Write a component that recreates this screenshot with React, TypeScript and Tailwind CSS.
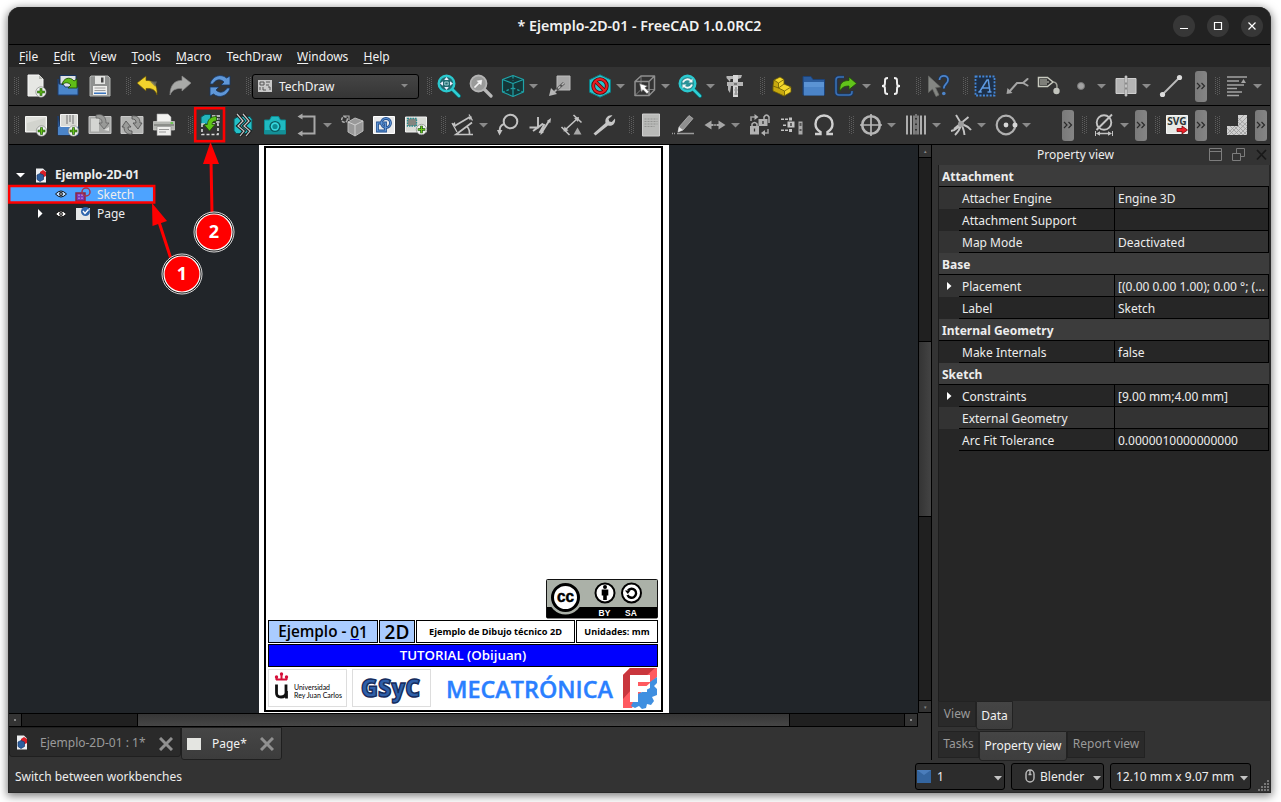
import React from "react";

const G = "#c3c3c3";
const D = "#8a8a8a";

type P = { children: React.ReactNode; className?: string };

function Svg({ children, className = "" }: P) {
  return (
    <svg width="24" height="24" viewBox="0 0 24 24" fill="none" className={"shrink-0 " + className}>
      {children}
    </svg>
  );
}

function PlusBadge({ cx = 17.5, cy = 18.5 }: { cx?: number; cy?: number }) {
  return (
    <g>
      <circle cx={cx} cy={cy} r="5.2" fill="#eef0ee" stroke="#777" strokeWidth=".6" />
      <path d={`M${cx - 3.8} ${cy}h7.6M${cx} ${cy - 3.8}v7.6`} stroke="#1d5a0a" strokeWidth="2.6" />
      <path d={`M${cx - 3.2} ${cy}h6.4M${cx} ${cy - 3.2}v6.4`} stroke="#6cc51c" strokeWidth="1.1" />
    </g>
  );
}

const icons: Record<string, React.ReactNode> = {
  fileNew: (
    <g>
      <path d="M4 1h11l4 4v17H4z" fill="#e6e7e4" stroke="#f8f8f8" />
      <path d="M15 1v4h4z" fill="#b5b7b2" />
      <PlusBadge cx={17} cy={18} />
    </g>
  ),
  open: (
    <g>
      <path d="M4 1.500h16v12H4z" fill="#dfe2e6" stroke="#16335f" />
      <path d="M2 5v16h20v-8H9L7 10H3z" fill="#4b86ca" stroke="#1c3f73" />
      <path d="M6 11c1-7 8-9 12-4l3-2v9h-9l3-3c-3-3-6-3-9 0z" fill="#5fbd17" stroke="#1f4f08" strokeWidth=".9" />
    </g>
  ),
  save: (
    <g>
      <path d="M3 2h17l2 2v18H2V3z" fill="#8f9190" stroke="#b4b6b4" />
      <path d="M7 2h10v8H7z" fill="#e3e4e2" />
      <path d="M13 3.500h2.500v5H13z" fill="#444" />
      <path d="M5 12h14v9H5z" fill="#efefed" />
      <path d="M6.500 14h11M6.500 16.500h11" stroke="#9c9c9c" />
      <path d="M6 18.500h12v1.500H6z" fill="#3b75bd" />
    </g>
  ),
  undo: (
    <g>
      <path d="M1 9l9-7v4.500c7-.5 12 4 11 14.500-1.500-5-5-7-11-6.500V17z" fill="#f1d22c" stroke="#665508" strokeWidth=".7" />
      <path d="M14 7.500h7l-2 5z" fill="#6d6d62" opacity=".8" />
    </g>
  ),
  redo: <path d="M23 9l-9-7v4.500C7 6 2 11 2 21c2-5 6-7 12-6.500V17z" fill="#a9aaa8" stroke="#868786" strokeWidth=".7" />,
  refresh: (
    <g fill="#5f97d8" stroke="#173764" strokeWidth=".8">
      <path d="M2 10C4 2 13-1 18.500 4L22 2v9h-9l3-3c-4-4-9-2-11 2z" />
      <path d="M22 14c-2 8-11 11-16.500 6L2 22v-9h9l-3 3c4 4 9 2 11-2z" />
    </g>
  ),
  zoomFit: (
    <g>
      <path d="M15 15l7 7" stroke="#0b5257" strokeWidth="4.400" strokeLinecap="round" />
      <path d="M15 15l7 7" stroke="#2ecfd4" strokeWidth="2.800" strokeLinecap="round" />
      <circle cx="9.500" cy="9.500" r="7.800" fill="#226a70" stroke="#2bc9cf" strokeWidth="2.400" />
      <path d="M9.500 3l2.300 3H7.200zM9.500 16l2.300-3H7.200zM3 9.500l3-2.300v4.600zM16 9.500l-3-2.300v4.600z" fill="#eef" />
      <path d="M7.800 8h3.400v3H7.800z" stroke="#b8e4e6" strokeWidth=".8" />
    </g>
  ),
  zoomSel: (
    <g>
      <path d="M15 15l7 7" stroke="#b9b9b9" strokeWidth="3.200" strokeLinecap="round" />
      <circle cx="9.500" cy="9.500" r="8" fill="#9a9b9a" stroke="#b4b4b4" strokeWidth="1.800" />
      <path d="M4.500 13l4.500-4.500-2-2 6.500-1-1 6.500-2-2L6 14.500z" fill="#f3f3f3" stroke="#777" strokeWidth=".4" />
    </g>
  ),
  cube: (
    <g stroke="#1fa3a8" strokeWidth="1.200" strokeLinejoin="round">
      <path d="M12 1.500l10.500 4v12.500L12 22.500 1.500 18V5.500z" fill="#143638" />
      <path d="M1.500 5.500l10.500 4 10.500-4M12 9.500v13" />
      <path d="M12 2v5M12 14l-10 4M12 14l10 4" strokeDasharray="2.500 2" />
    </g>
  ),
  link: (
    <g>
      <path d="M9 2h13v14H9z" fill="#a8a8a8" stroke="#bdbdbd" />
      <path d="M16 9L5 19" stroke="#555" strokeWidth="3" />
      <path d="M16 9L5 19" stroke="#b7b7b7" strokeWidth="1.500" strokeDasharray="3 2" />
      <path d="M1 22l2-8 6 6z" fill="#b7b7b7" />
    </g>
  ),
  drawStyle: (
    <g>
      <path d="M12 .8l10.500 5v12.400L12 23.200l-10.500-5V5.800z" fill="#27c3cb" stroke="#0c7f86" />
      <circle cx="12" cy="12" r="6.800" stroke="#53060a" strokeWidth="3.800" />
      <path d="M7.500 7.500l9 9" stroke="#53060a" strokeWidth="3.600" />
      <circle cx="12" cy="12" r="6.800" stroke="#e81d22" strokeWidth="2.200" />
      <path d="M7.200 7.200l9.600 9.600" stroke="#e81d22" strokeWidth="2.200" />
    </g>
  ),
  selBox: (
    <g stroke="#8f8f8f" strokeWidth="1.500" strokeLinejoin="round">
      <path d="M2 7.500L8 2h13.500v14L16 21.500H2zM2 7.500h14v14M16 7.500L21.500 2" />
      <path d="M8 2v13.500h13.500M8 15.500l-6 6" strokeWidth=".8" />
      <path d="M6.500 9.500l8 2.500-2.500 1.700 4 4-2 2-4-4-1.500 2.500z" fill="#fff" stroke="#555" strokeWidth=".6" />
    </g>
  ),
  zoomRefresh: (
    <g>
      <path d="M15 15l7 7" stroke="#0b5257" strokeWidth="4.400" strokeLinecap="round" />
      <path d="M15 15l7 7" stroke="#2ecfd4" strokeWidth="2.800" strokeLinecap="round" />
      <circle cx="9.500" cy="9.500" r="7.800" fill="#2a9298" stroke="#2bc9cf" strokeWidth="2.400" />
      <path d="M5 8.500c1.500-4 6-4 8-1.500M14 10.500c-1.500 4-6 4-8 1.500" stroke="#f3f6f6" strokeWidth="1.800" />
      <path d="M10.500 8.500h4v-4zM8.500 10.500H4.500v4z" fill="#f3f6f6" />
    </g>
  ),
  caliper: (
    <g fill="#b5b5b5">
      <path d="M10 1h5v22h-5z" fill="#d6d6d6" />
      <path d="M3.500 2H10v3H7.500L7 8 3.500 4zM15 1h4l-1 3-3 1z" />
      <path d="M4 8h16v4H8l-1 7-2-3V12H4z" />
      <path d="M11 9h3v2h-3z" fill="#777" />
      <path d="M12 14h2M11.500 16h3M12 18h2M11.500 20h3" stroke="#555" strokeWidth=".9" />
    </g>
  ),
  part: (
    <g stroke="#6b5c05" strokeWidth=".8" strokeLinejoin="round">
      <path d="M4 6l6-3 4 2.500V10l7 3v5l-7 4-11-6z" fill="#f3d72b" />
      <path d="M4 6l4.500 3v5l6 3v5L3 17v-5z" fill="#c7a90f" />
      <path d="M8.500 9L14 5.500M8.500 14l5.500-4M14.500 17l6.500-4M3 12l5.500 2" />
    </g>
  ),
  folder: (
    <g>
      <path d="M1 2.500h8l2 3h11.500V21H1z" fill="#2b5c9d" stroke="#1d4378" />
      <path d="M2 8h20v13.500H2z" fill="#4b84c8" />
      <path d="M2 8h20v5H2z" fill="#5b93d4" />
    </g>
  ),
  exportIcon: (
    <g>
      <path d="M10 3H5Q2 3 2 6v12q0 3 3 3h10q3 0 3-3v-1" stroke="#173866" strokeWidth="3.200" />
      <path d="M10 3H5Q2 3 2 6v12q0 3 3 3h10q3 0 3-3v-1" stroke="#3d72b5" strokeWidth="1.500" />
      <path d="M6 17C5 9 9 6.500 15 6.500V3l7.500 6.500-7.500 6V12c-4 0-7 1-9 5z" fill="#62c31b" stroke="#1f4f08" strokeWidth=".8" />
    </g>
  ),
  braces: (
    <path d="M9 4C6 4 6 5 6 8s0 4-3 4c3 0 3 1 3 4s0 4 3 4M15 4c3 0 3 1 3 4s0 4 3 4c-3 0-3 1-3 4s0 4-3 4" stroke="#efefef" strokeWidth="2" />
  ),
  whats: (
    <g>
      <path d="M2.500 2l12 11-5 .5L13 21l-3 1.500-3.500-7.500-4 3.500z" fill="#848682" stroke="#6a6b68" strokeWidth=".7" />
      <path d="M13.500 6c0-5.500 9-5.500 8.500 0 0 4-4.200 4-4.200 8.500" stroke="#173866" strokeWidth="3" />
      <path d="M13.500 6c0-5.500 9-5.500 8.500 0 0 4-4.200 4-4.200 8.500" stroke="#4d84c9" strokeWidth="1.700" />
      <circle cx="17.800" cy="19.500" r="1.800" fill="#4d84c9" />
    </g>
  ),
  annot: (
    <g>
      <rect x="2.500" y="2.500" width="19" height="19" fill="#1d2f47" stroke="#4487d8" strokeWidth="1.800" strokeDasharray="2 1.400" />
      <path d="M6.500 18L14 6h1.300L17 18M9.500 14h7M5.300 18h3.500M14.500 18h4" stroke="#5d9ae2" strokeWidth="1.500" />
    </g>
  ),
  leader: (
    <g>
      <path d="M4 18l8-9h6l4.500-4M18 9l4.500 2.500" stroke="#a5a5a5" strokeWidth="2" strokeLinecap="round" />
      <path d="M1.500 20l1-6 5 5z" fill="#a5a5a5" />
    </g>
  ),
  rich: (
    <g>
      <path d="M1.500 3.500h9l5.500 4.500-5.500 4.500h-9z" stroke="#c8cabf" strokeWidth="1.500" />
      <path d="M3 6h7M3 8h9M3 10h7" stroke="#c8cabf" strokeWidth="1" />
      <path d="M16 8q4.500 0 4 6" stroke="#9fa098" strokeWidth="1.500" />
      <circle cx="19.500" cy="17" r="3.200" fill="#c2c4bd" />
    </g>
  ),
  vertex: <circle cx="12" cy="12" r="3.500" fill="#a3a3a3" stroke="#777" />,
  centerLine: (
    <g>
      <path d="M2 4.500h20v15H2z" fill="#b4b4b4" stroke="#cfcfcf" />
      <path d="M12 2v20" stroke="#8a8a8a" strokeWidth="3" />
      <path d="M12 1.500v21" stroke="#e8e8e8" strokeWidth="1.200" strokeDasharray="7 2 3 2" />
    </g>
  ),
  line2: (
    <g>
      <path d="M3.500 20.500l17-17" stroke="#bdbdbd" strokeWidth="1.800" />
      <circle cx="3.500" cy="20.500" r="2.600" fill="#dcdcdc" />
      <circle cx="20.500" cy="3.500" r="2.600" fill="#dcdcdc" />
    </g>
  ),
  textLines: (
    <g>
      <path d="M2 3h20M2 7h12M2 11h17M2 14.500h10M2 18h15M2 21.500h12" stroke="#a4a4a4" strokeWidth="1.500" />
      <path d="M16 9l2.500-4L21 9z" fill="#a4a4a4" />
    </g>
  ),
  pageNew: (
    <g>
      <path d="M1.500 3.500h21v15.500h-21z" fill="#dfe0db" stroke="#f6f6f4" />
      <path d="M3 10l18-5v13H3z" fill="#c9cbc5" opacity=".6" />
      <PlusBadge cx={17.500} cy={18} />
    </g>
  ),
  template: (
    <g>
      <path d="M2 3v19h20v-9H4z" fill="#3f76b8" stroke="#1b3d70" />
      <path d="M4.500 1.500h17v12h-17z" fill="#d9dad6" stroke="#f3f3f3" />
      <path d="M11 2v9M14 2v7M17 2v9" stroke="#888" strokeWidth="1.300" />
      <path d="M2 14h20v8H2z" fill="#4b84c8" />
      <PlusBadge cx={17.500} cy={18} />
    </g>
  ),
  redraw: (
    <g>
      <path d="M1 3.500h22v17H1z" fill="#a8a9a7" stroke="#c4c4c4" />
      <path d="M3 5.500h8v13H3z" fill="#d4d5d2" />
      <path d="M8 2c7-2 10 2 10 8h3l-5 6-5-6h3c0-4-2-5-6-5z" fill="#989997" stroke="#5c5c5c" strokeWidth=".7" />
      <path d="M16 17l5-3v4z" fill="#dededc" />
    </g>
  ),
  redrawAll: (
    <g>
      <path d="M1 3.500h22v17H1z" fill="#b4b5b3" stroke="#c9c9c9" />
      <path d="M12 3c5-1 8 2 8 7h2l-4 6-5-6h3c0-3-1-4-4-4z" fill="#9a9b99" stroke="#4c4c4c" strokeWidth=".8" />
      <path d="M12 21c-5 1-8-2-8-7H2l4-6 5 6H8c0 3 1 4 4 4z" fill="#9a9b99" stroke="#4c4c4c" strokeWidth=".8" />
    </g>
  ),
  printer: (
    <g>
      <path d="M5 1h11l3 3v7H5z" fill="#f2f2f0" stroke="#aaa" strokeWidth=".6" />
      <path d="M1.500 8.500h21v8.500h-21z" fill="#b5b7b3" stroke="#d5d6d3" strokeWidth=".7" />
      <path d="M2 11h20v2H2z" fill="#8c8e8a" />
      <path d="M18.500 10h2.500" stroke="#5c3" strokeWidth="1.500" />
      <path d="M5 13.500h14v9H5z" fill="#eeeeec" stroke="#888" strokeWidth=".6" />
      <path d="M7 16.500h10M7 19h7" stroke="#999" />
    </g>
  ),
  view: (
    <g>
      <path d="M3 4l4-2.500h5.500v7L9 11H3z" fill="#23b5bd" stroke="#0a5358" />
      <path d="M14 3h8M17 6h5M18 9h4" stroke="#dfe3e3" strokeWidth="1.500" strokeDasharray="3.500 1" />
      <rect x="4" y="11" width="16" height="10.500" stroke="#dcdcdc" strokeWidth="1.600" strokeDasharray="3 2" />
      <path d="M18.500 3.500V8c-3 0-4.500 1-4.500 3.500h3L11.500 18 6 11.500h3.500c0-5 3-8 9-8z" fill="#5ec317" stroke="#1f5206" strokeWidth=".8" />
    </g>
  ),
  broken: (
    <g>
      <path d="M3 6l4-2.500h12l2 3v11l-4 3H5l-2-3z" fill="#23c0c8" stroke="#0a5358" />
      <path d="M6 1l6 7-5 5 6 5-4 5M12 1l6 7-5 5 6 5-4 5" stroke="#1d1d1d" strokeWidth="3.400" />
      <path d="M6 1l6 7-5 5 6 5-4 5M12 1l6 7-5 5 6 5-4 5" stroke="#c7c7c7" strokeWidth="1.200" />
    </g>
  ),
  camera: (
    <g>
      <path d="M1.500 7h5l2-3.500h7L17.500 7h5v14h-21z" fill="#1fb9c1" stroke="#0c8c93" />
      <path d="M2 17h20v4H2z" fill="#149098" />
      <circle cx="12" cy="13.500" r="5.600" fill="#0b5c62" />
      <circle cx="12" cy="13.500" r="4.200" fill="#37d7de" />
      <circle cx="12" cy="13.500" r="2.600" fill="#0d8990" />
    </g>
  ),
  section: (
    <g>
      <path d="M5 3.500h14.500v17H5" stroke="#a8a8a8" strokeWidth="2" />
      <path d="M2.500 3.500l5-3v6zM2.500 20.500l5-3v6z" fill="#a8a8a8" />
    </g>
  ),
  box3d: (
    <g>
      <path d="M8 9l7-4 8 3v10l-8 5-7-4z" fill="#999" stroke="#bbb" />
      <path d="M8 9l7 3 8-4M15 12v11" stroke="#cfcfcf" />
      <circle cx="4.500" cy="6.500" r="2.800" stroke="#ababab" strokeWidth="1.500" strokeDasharray="3 1" />
      <path d="M3 3h6v4" stroke="#ababab" strokeWidth="1.200" />
    </g>
  ),
  drawView: (
    <g>
      <path d="M1.500 3.500h21v17h-21z" fill="#e9eaeb" stroke="#fff" />
      <path d="M5.500 10h8v8h-8z" stroke="#1e4c8d" strokeWidth="2.800" />
      <circle cx="14" cy="10" r="4.500" stroke="#1e4c8d" strokeWidth="2.800" />
      <path d="M5.500 10h8v8h-8z" stroke="#5f94d4" strokeWidth="1.200" />
      <circle cx="14" cy="10" r="4.500" stroke="#5f94d4" strokeWidth="1.200" />
    </g>
  ),
  spread: (
    <g>
      <path d="M1.500 4h21v15h-21z" fill="#d9dbd6" stroke="#f2f2f2" />
      <rect x="3.500" y="5.500" width="9" height="7.500" fill="#85857f" stroke="#268c90" strokeWidth="1.300" strokeDasharray="1.500 1" />
      <PlusBadge cx={17.500} cy={16.500} />
    </g>
  ),
  lenDim: (
    <g stroke={G} strokeWidth="1.700">
      <path d="M3.500 13L18 4.500" />
      <path d="M1 11.500l3-2.500.7 4.700zM21 3.500l-4 .2 2 3.800z" fill={G} stroke="none" />
      <path d="M22 21.500H5L21 9.500M16 13.500c2 2 2.700 5 2.500 8" />
      <path d="M1 10l5 9M18 1.500l3.500 6" strokeWidth="1.300" />
    </g>
  ),
  balloon: (
    <g stroke={G} strokeWidth="2">
      <circle cx="14.500" cy="8.500" r="6.800" />
      <path d="M8 11c-5 2-4 5-4.500 9" />
      <path d="M1 17h5.500l-3 5.500z" fill={G} stroke="none" />
    </g>
  ),
  axo: (
    <g stroke={G} strokeWidth="1.900">
      <path d="M1.500 14.500H10V4M10 14.500l-5 3.500M10 14.500l5-4M14 19L21 8M11.500 20l5-9" />
      <path d="M12.500 22l.5-5 3 2zM23 5l-.7 5-3.500-2z" fill={G} stroke="none" />
    </g>
  ),
  landmark: (
    <g stroke={G} strokeWidth="1.600">
      <path d="M5 17L18 5M13.500 2l8 7.500M1.500 14l8 8" />
      <path d="M3.500 18.500l1-5 4 4zM19 4l-1 5-4-4z" fill={G} stroke="none" />
      <path d="M13.500 21.500l4-7 4 7z" fill="#a8a8a8" stroke="none" />
    </g>
  ),
  wrench: <path d="M3.500 22.500l-2-2L13.500 10c-1-5 3-8.500 7-7.500L16.500 6l.8 2.500 2.500.5L23 5.500c1 5-3 8.500-7 7z" fill="#c6c6c6" />,
  sheet: (
    <g>
      <path d="M3.500 1h17v22h-17z" fill="#b9bab8" stroke="#cfcfcf" />
      <path d="M5.500 6h13M5.500 8.500h13M5.500 11h13M5.500 13.500h10" stroke="#939492" strokeDasharray="2 1" />
    </g>
  ),
  pencil: (
    <g>
      <path d="M7 19l1-5L18 2.500l4 3L12 17z" fill="#8f8f8f" stroke="#b5b5b5" strokeWidth=".8" />
      <path d="M7 19l1-5 4 3z" fill="#e8e8e8" />
      <path d="M1 20.500h4" stroke="#9b9b9b" strokeWidth="1.300" strokeDasharray="1 1" />
      <path d="M6 20.500h17" stroke="#9b9b9b" strokeWidth="1.600" />
    </g>
  ),
  hArrows: (
    <g fill="#a6a6a6">
      <path d="M1.500 12l7-4.500v9zM22.500 12l-7-4.500v9z" />
      <path d="M8 11h2.500v2H8zM13.500 11H16v2h-2.500zM11 11.300h2v1.400h-2z" />
    </g>
  ),
  locks: (
    <g>
      <rect x="2" y="13" width="9" height="8.500" fill="#b2b2b2" />
      <path d="M4 13v-2q2.500-3 5 0v2" stroke="#b2b2b2" strokeWidth="1.500" />
      <rect x="10.500" y="6" width="9" height="7" fill="#b2b2b2" />
      <path d="M16 6V4q2.500-4 5 0v6" stroke="#b2b2b2" strokeWidth="1.500" />
      <path d="M3 8V4h4M20 16v4h-4" stroke="#9d9d9d" strokeWidth="1.600" />
      <path d="M6.500 1l4 3-4 3zM17 17l-4 3 4 3z" fill="#b2b2b2" />
      <path d="M6.500 15.500v3M15 8v3" stroke="#333" strokeWidth="1.300" />
    </g>
  ),
  stack: (
    <g fill={G}>
      <path d="M1 5.500h3v1.500H1zM5 5.500h3v1.500H5zM1 16.500h3V18H1zM5 16.500h3V18H5zM3 11.500h3V13H3zM9 4.500v3h3v-3zM9 16v3h3v-3z" />
      <path d="M7.500 8.500h7v6h-7z" />
      <path d="M10.200 10v3h1.600v-3z" fill="#444" />
      <path d="M18.500 8.500h4v13h-4z" fill="#aaa" />
      <path d="M19.500 10h2v3h-2zM19.500 16h2v2h-2z" fill="#555" />
    </g>
  ),
  omega: <path d="M3 21h5.500v-2C5 17 3.500 14 3.500 11c0-5 3.500-8.500 8.500-8.500s8.500 3.500 8.500 8.500c0 3-1.500 6-5 8v2H21" stroke="#cfcfcf" strokeWidth="2.400" />,
  centerMark: (
    <g stroke="#b5b5b5">
      <circle cx="12" cy="12" r="8.800" strokeWidth="2.600" />
      <path d="M12 1v22M1 12h22" strokeWidth="1.700" />
    </g>
  ),
  threads: (
    <g stroke="#b5b5b5">
      <path d="M3 2.500v19M7 2.500v19M17 2.500v19M21 2.500v19" strokeWidth="1.900" />
      <path d="M10 2.500v19M14 2.500v19" strokeWidth="1.200" />
      <path d="M12 1v22" strokeWidth="1" strokeDasharray="4 1.500" />
    </g>
  ),
  intersect: (
    <g stroke={G} strokeWidth="1.900">
      <path d="M7 2c3 5 8 11 8.500 20M19.500 4L5 16M2 18c7-1 9-8 13-6 3 1 5 2 7 5M12 12c-1 4-3 7-6 10" />
      <circle cx="12" cy="11" r="3" fill="#9d9d9d" stroke="none" />
    </g>
  ),
  circ: (
    <g>
      <circle cx="12" cy="12" r="9.300" stroke="#b0b0b0" strokeWidth="2.200" />
      <circle cx="12" cy="12" r="2.400" fill="#d6d6d6" />
      <circle cx="21" cy="12" r="2.500" fill="#d6d6d6" />
    </g>
  ),
  diameter: (
    <g stroke={G} strokeWidth="1.900">
      <circle cx="12" cy="9.500" r="7.300" />
      <path d="M4.500 17L20 1.500" />
      <path d="M6 20.500h12" strokeWidth="1.300" />
      <path d="M4 20.500l4-2.300v4.600zM20 20.500l-4-2.300v4.600z" fill={G} stroke="none" />
      <path d="M3.500 18v5M20.500 18v5" strokeWidth="1" />
    </g>
  ),
  svgExport: (
    <g>
      <path d="M1.500 2.500h21v18h-21z" fill="#e6e8e4" stroke="#f5f5f5" />
      <text x="2.200" y="11.500" fontSize="10" fontWeight="700" fontFamily="Noto Sans, sans-serif" fill="#2b3436" textLength="19.500" lengthAdjust="spacingAndGlyphs">SVG</text>
      <path d="M12 15.500h5V13l5.500 4-5.500 4v-2.500h-5z" fill="#ef2029" stroke="#7a0a0c" strokeWidth=".8" />
    </g>
  ),
  hatch: (
    <g>
      <path d="M13 2h9v20H2v-9h11z" fill="#d0d0d0" />
      <path d="M13 5l9 8M13 9l9 8M13 13l9 9M9 13l9 9M5 13l9 9M2 15l7 7M22 4l-18 18M22 9L9 22M22 14l-8 8M22 18l-4 4M13 8l6-6M10 13l-8 8" stroke="#9a9a9a" strokeWidth=".8" />
    </g>
  ),
};

function Tool({ name, drop = false, gap = "" }: { name: string; drop?: boolean; gap?: string }) {
  return (
    <div className={"flex shrink-0 items-center " + gap + (drop ? " w-[45px]" : " w-8")}>
      <div className="flex w-8 shrink-0 justify-center">
        <Svg>{icons[name]}</Svg>
      </div>
      {drop && (
        <svg width="9" height="5" className="shrink-0">
          <path d="M0 0h9L4.500 4.500z" fill={D} />
        </svg>
      )}
    </div>
  );
}

function Handle({ w = "w-[15px]" }: { w?: string }) {
  return (
    <div className={"flex shrink-0 justify-end " + w}>
      <svg width="6" height="18">
        {[0, 2, 4].map((x) => (
          <path key={x} d={`M${x + 0.5} ${x === 2 ? 1 : 0}v17`} stroke="#5d5d5d" strokeDasharray="1 1" />
        ))}
      </svg>
    </div>
  );
}

function More({ gap = "" }: { gap?: string }) {
  return (
    <div className={"flex h-[31px] w-3 shrink-0 items-center justify-center rounded-[3px] bg-gradient-to-r from-[#7a7a7a] to-[#858585] " + gap}>
      <svg width="10" height="8" fill="none" stroke="#2a2a2a" strokeWidth="1.200">
        <path d="M1 1l3 3-3 3M5.500 1l3 3-3 3" />
      </svg>
    </div>
  );
}

function DocIcon() {
  return (
    <svg width="12" height="15" viewBox="0 0 12 15">
      <path d="M1 .5h7l3 3v11H1z" fill="#eef0f2" />
      <path d="M5 4l3-2 3 2v4l-3 1.500L5 8z" fill="#d81e26" />
      <path d="M2 7l3-1.500L8.500 7v4.500L5 13.500l-3-2z" fill="#2d5f9f" stroke="#173a6b" strokeWidth=".7" />
    </svg>
  );
}

function Eye({ c }: { c: string }) {
  return (
    <svg width="12" height="8" viewBox="0 0 12 8">
      <path d="M.5 4Q6-2 11.500 4 6 10 .5 4z" fill={c} stroke="#111" strokeWidth="1" />
      <circle cx="6" cy="4" r="1.900" fill="#111" />
      <circle cx="6" cy="4" r=".8" fill="#fff" />
    </svg>
  );
}

const props: { k: string; v?: string; head?: boolean; light?: boolean; exp?: boolean }[] = [
  { k: "Attachment", head: true },
  { k: "Attacher Engine", v: "Engine 3D", light: true },
  { k: "Attachment Support", v: "" },
  { k: "Map Mode", v: "Deactivated", light: true },
  { k: "Base", head: true },
  { k: "Placement", v: "[(0.00 0.00 1.00); 0.00 °; (…", light: true, exp: true },
  { k: "Label", v: "Sketch" },
  { k: "Internal Geometry", head: true },
  { k: "Make Internals", v: "false" },
  { k: "Sketch", head: true },
  { k: "Constraints", v: "[9.00 mm;4.00 mm]", exp: true },
  { k: "External Geometry", v: "", light: true },
  { k: "Arc Fit Tolerance", v: "0.0000010000000000" },
];

function TitleBar() {
  return (
    <div className="flex h-[38px] shrink-0 items-center border-b border-black bg-[#222222]">
      <div className="w-[97px]" />
      <div className="flex-1 text-center text-[14.2px] font-semibold text-[#f2f2f2]">* Ejemplo-2D-01 - FreeCAD 1.0.0RC2</div>
      <div className="mr-[7px] flex gap-3">
        {["M7 13.500h8", "M7.500 7.500h7v7h-7z", "M7.500 7.500l7 7M14.500 7.500l-7 7"].map((d) => (
          <svg key={d} width="22" height="22" fill="none">
            <circle cx="11" cy="11" r="11" fill="#373737" />
            <path d={d} stroke="#fff" strokeWidth="1.200" />
          </svg>
        ))}
      </div>
    </div>
  );
}

function MenuBar() {
  return (
    <div className="flex h-[22px] shrink-0 items-center gap-[15.2px] bg-[#262626] pt-[2px] pl-[10px] text-[#f2f2f2]">
      {["File", "Edit", "View", "Tools", "Macro"].map((m) => (
        <span key={m}>
          <u className="underline-offset-2">{m[0]}</u>
          {m.slice(1)}
        </span>
      ))}
      <span>TechDraw</span>
      {["Windows", "Help"].map((m) => (
        <span key={m}>
          <u className="underline-offset-2">{m[0]}</u>
          {m.slice(1)}
        </span>
      ))}
    </div>
  );
}

function Toolbars() {
  return (
    <>
      <div className="flex h-[39px] shrink-0 items-center border-b border-black bg-[#333333]">
        <Handle w="w-[11px]" />
        <Tool name="fileNew" />
        <Tool name="open" />
        <Tool name="save" />
        <Handle w="w-4" />
        <Tool name="undo" />
        <Tool name="redo" />
        <Tool name="refresh" gap="ml-2" />
        <Handle w="w-4" />
        <div className="flex h-[25px] w-[167px] shrink-0 items-center rounded-[3px] border border-black bg-gradient-to-b from-[#454545] to-[#353535] pl-[5px] text-[#f2f2f2]">
          <svg width="14" height="12">
            <path d="M0 0h14v12H0z" fill="#c9c9c9" />
            <path d="M2 2h4v3H2zM8 2h4M8 5h3M2 7v3M5 7v3h3M10 7h2v3" fill="none" stroke="#555" />
          </svg>
          <span className="ml-[7px] flex-1 pt-[2px]">TechDraw</span>
          <svg width="7" height="4" className="mr-[10px]">
            <path d="M0 0h7L3.500 3.500z" fill={D} />
          </svg>
        </div>
        <Handle w="w-[14px]" />
        <Tool name="zoomFit" />
        <Tool name="zoomSel" />
        <Tool name="cube" drop />
        <Tool name="link" gap="ml-[2px]" />
        <Tool name="drawStyle" drop gap="ml-2" />
        <Tool name="selBox" drop />
        <Tool name="zoomRefresh" drop />
        <Tool name="caliper" />
        <Handle />
        <Tool name="part" />
        <Tool name="folder" />
        <Tool name="exportIcon" drop />
        <Tool name="braces" />
        <Handle />
        <Tool name="whats" />
        <Handle />
        <Tool name="annot" />
        <Tool name="leader" />
        <Tool name="rich" />
        <Tool name="vertex" drop />
        <Tool name="centerLine" drop />
        <Tool name="line2" />
        <More gap="ml-2" />
        <Handle w="w-[14px]" />
        <Tool name="textLines" drop />
      </div>
      <div className="flex h-[39px] shrink-0 items-center border-b border-black bg-[#333333]">
        <Handle w="w-[11px]" />
        <Tool name="pageNew" />
        <Tool name="template" />
        <Tool name="redraw" />
        <Tool name="redrawAll" />
        <Tool name="printer" />
        <Handle w="w-[14px]" />
        <Tool name="view" />
        <Tool name="broken" gap="ml-px" />
        <Tool name="camera" />
        <Tool name="section" drop />
        <Tool name="box3d" />
        <Tool name="drawView" />
        <Tool name="spread" />
        <Handle />
        <Tool name="lenDim" drop />
        <Tool name="balloon" />
        <Tool name="axo" />
        <Tool name="landmark" />
        <Tool name="wrench" />
        <Handle />
        <Tool name="sheet" />
        <Tool name="pencil" />
        <Tool name="hArrows" drop />
        <Tool name="locks" />
        <Tool name="stack" />
        <Tool name="omega" />
        <Handle />
        <Tool name="centerMark" drop />
        <Tool name="threads" drop />
        <Tool name="intersect" drop />
        <Tool name="circ" drop />
        <More gap="ml-[27px]" />
        <Handle w="w-[14px]" />
        <Tool name="diameter" drop />
        <More gap="ml-[2px]" />
        <Handle w="w-[14px]" />
        <Tool name="svgExport" />
        <More gap="ml-[2px]" />
        <Handle w="w-[14px]" />
        <Tool name="hatch" />
        <More gap="ml-[2px]" />
      </div>
    </>
  );
}

function Tree() {
  return (
    <div className="w-[250px] shrink-0 pt-[21px] text-[#ededed]">
      <div className="flex h-[19px] items-center">
        <svg width="9" height="5" className="ml-[7px]">
          <path d="M0 0h9L4.500 4.500z" fill="#fff" />
        </svg>
        <div className="ml-[10px]">
          <DocIcon />
        </div>
        <b className="ml-[8px] pb-[2px] text-[11.950px]">Ejemplo-2D-01</b>
      </div>
      <div className="flex h-[18px] w-[146px] items-center bg-[#4da3ff]">
        <div className="ml-[46px] flex">
          <Eye c="#bcdcff" />
        </div>
        <svg width="16" height="15" viewBox="0 0 16 15" className="ml-2" fill="none">
          <path d="M1 6h9v8H1z" fill="#7a35b8" stroke="#8d2740" strokeWidth="1.500" />
          <circle cx="11" cy="5" r="4" stroke="#a3354d" strokeWidth="1.500" />
          <path d="M4 7.500v5M7 7.500v5" stroke="#d9b6f2" strokeDasharray="1.500 1.500" />
        </svg>
        <span className="ml-[6px] pt-[2px]">Sketch</span>
      </div>
      <div className="mt-px flex h-[19px] items-center">
        <svg width="5" height="9" className="ml-[29px]">
          <path d="M0 0v9L4.500 4.500z" fill="#fff" />
        </svg>
        <div className="ml-[12px]">
          <Eye c="#fff" />
        </div>
        <svg width="16" height="14" viewBox="0 0 16 14" className="ml-2" fill="none">
          <path d="M1 1h14v12H1z" fill="#e4e7e8" />
          <circle cx="10.500" cy="4.500" r="4.500" fill="#2f66ad" />
          <path d="M8 4l2 2.500 3.500-4" stroke="#fff" strokeWidth="1.400" />
        </svg>
        <span className="ml-[6px]">Page</span>
      </div>
    </div>
  );
}

function CCBadge() {
  return (
    <svg width="112" height="40" viewBox="0 0 112 40" fontFamily="Liberation Sans, sans-serif" fontWeight="700">
      <rect x=".5" y=".5" width="111" height="38.500" rx="1" fill="#abb1a8" stroke="#111" />
      <path d="M1 28h110v11H1z" fill="#000" />
      <circle cx="19.500" cy="18.500" r="17" fill="#abb1a8" />
      <circle cx="19.500" cy="18.500" r="13" fill="#fff" stroke="#000" strokeWidth="3" />
      <text x="11" y="23" fontSize="16" textLength="17" lengthAdjust="spacingAndGlyphs" stroke="#000" strokeWidth=".5">cc</text>
      <circle cx="59" cy="14" r="9.500" fill="#fff" stroke="#000" strokeWidth="2" />
      <circle cx="59" cy="8" r="2" fill="#000" />
      <path d="M55.700 10.500h6.600v6h-1.500V21h-3.600v-4.500h-1.500z" fill="#000" />
      <circle cx="85.500" cy="14" r="9.500" fill="#fff" stroke="#000" strokeWidth="2" />
      <path d="M82 11.500a4.500 4.500 0 1 1-.5 4.500" fill="none" stroke="#000" strokeWidth="2.400" />
      <path d="M79 11.500h5.500l-2.700 3.500z" fill="#000" />
      <text x="52.500" y="37" fontSize="8.500" fill="#fff">BY</text>
      <text x="79" y="37" fontSize="8.500" fill="#fff">SA</text>
    </svg>
  );
}

function Sheet() {
  return (
    <div className="flex h-[568px] w-[410px] shrink-0 bg-white pt-px pl-[5px] font-['Open_Sans','Noto_Sans',sans-serif] text-black">
      <div className="flex h-[566px] w-[399px] flex-col items-end border-2 border-black pr-[3px] pb-[2px] pl-[2px]">
        <div className="flex-1" />
        <CCBadge />
        <div className="mt-px flex h-[23px] w-full justify-between font-semibold">
          <div className="flex w-[110px] items-center justify-center border border-black bg-[#aaccff] pb-px text-[15.3px] whitespace-nowrap">
            Ejemplo -&nbsp;
            <span className="relative top-px">
              <span className="underline decoration-[#0000ff] decoration-1 underline-offset-1">0</span>1
            </span>
          </div>
          <div className="flex w-[36px] items-center justify-center border border-black bg-[#aaccff] text-[19px]">2D</div>
          <div className="flex w-[159px] items-center justify-center border border-black text-[9.200px] font-bold whitespace-nowrap">
            Ejemplo de Dibujo técnico 2D
          </div>
          <div className="flex w-[82px] items-center justify-center border border-black text-[9.100px] font-bold whitespace-nowrap">
            Unidades: mm
          </div>
        </div>
        <div className="mt-px flex h-[23px] w-full items-center justify-center border border-black bg-[#0000ff] pb-px text-[13.3px] font-semibold text-white">
          TUTORIAL (Obijuan)
        </div>
        <div className="mt-[1px] flex h-[40px] w-full items-center">
          <svg width="79" height="38" viewBox="0 0 79 38" fontFamily="Lato, sans-serif">
            <rect x=".5" y=".5" width="78" height="37" fill="#fff" stroke="#ddd" />
            <path d="M8.500 11v-3M13.500 11V5M18.500 11v-3M8 10.500h11" stroke="#d6103a" strokeWidth="2" fill="none" />
            <circle cx="8.500" cy="8" r="1.700" fill="#d6103a" />
            <circle cx="13.500" cy="5" r="1.700" fill="#d6103a" />
            <circle cx="18.500" cy="8" r="1.700" fill="#d6103a" />
            <path d="M8.500 15.500V24q0 4 4.500 4t5-4v-8.500M18.500 22v7.500" stroke="#111" strokeWidth="2.800" fill="none" />
            <text x="26" y="21" fontSize="7" textLength="36" lengthAdjust="spacingAndGlyphs">Universidad</text>
            <text x="26" y="29" fontSize="7" textLength="48" lengthAdjust="spacingAndGlyphs">Rey Juan Carlos</text>
          </svg>
          <svg width="79" height="38" viewBox="0 0 79 38" className="ml-[5px]" fontFamily="Open Sans, sans-serif" fontWeight="800">
            <rect x=".5" y=".5" width="78" height="37" fill="#fff" stroke="#ddd" />
            <text x="9" y="27.500" fontSize="24" textLength="59" lengthAdjust="spacingAndGlyphs" fill="#2f5fa8" stroke="#142a5c" strokeWidth="1.400">
              GSyC
            </text>
          </svg>
          <svg width="170" height="40" viewBox="0 0 170 40" className="ml-[14px]" fontFamily="Open Sans, sans-serif" fontWeight="600">
            <text x="1" y="30" fontSize="22.500" textLength="167" lengthAdjust="spacingAndGlyphs" fill="#2a7fff" stroke="#2a7fff" strokeWidth=".4">
              MECATRÓNICA
            </text>
          </svg>
          <svg width="35" height="41" viewBox="0 0 35 41" className="ml-[8px] overflow-visible">
            <path d="M0 7L7 0h27v9L20 21 9 40H0z" fill="#ff5a60" />
            <path d="M0 7L7 0h25l-9 8H8v14L0 31z" fill="#c9363d" />
            <path d="M34 9l-7 5 0 6-12 6-5 8-2 4 4 2 4-2 3 3 4-1 1-4 4 1 3-4-2-4 5-2v-6l-3-3 3-3z" fill="#3f8fe0" />
            <path d="M7 7h20v7H15v4h9v6h-9v10H7z" fill="#fff" />
          </svg>
        </div>
      </div>
    </div>
  );
}

function PropertyPanel() {
  return (
    <div className="flex w-[339px] shrink-0 flex-col border-l border-black bg-[#333333] pl-[6px]">
      <div className="flex h-5 shrink-0 items-center text-[#ededed]">
        <div className="w-[275px] text-center">Property view</div>
        <svg width="60" height="14" viewBox="0 0 60 14" fill="none" stroke="#7d7d7d" className="ml-[-4px]">
          <path d="M.5 .5h12v12H.5zM.5 3.500h12M23.500 5.500h8v7h-8zM27.500 5V.5h8v8H32" />
          <path d="M48 2l9 9.500M57 2l-9 9.500" stroke="#191919" strokeWidth="1.800" />
        </svg>
      </div>
      <div className="flex h-[536px] w-[332px] shrink-0 flex-col border-l border-[#1c1c1c] bg-[#262626] text-[#ededed]">
        {props.map((p, i) =>
          p.head ? (
            <div key={i} className="flex h-[22px] w-[330px] items-center border-b border-black bg-[#3c3c3c] pt-[2px] pl-[3px] font-bold">
              {p.k}
            </div>
          ) : (
            <div key={i} className={"flex h-[22px] w-[330px] " + (p.light ? "bg-[#333333]" : "bg-[#262626]")}>
              <div className="flex w-[20px] items-center pl-[8px]">
                {p.exp && (
                  <svg width="5" height="8">
                    <path d="M0 0v8l4.500-4z" fill="#fff" />
                  </svg>
                )}
              </div>
              <div className="flex w-[156px] items-center border-r border-b border-black pt-[2px] pl-[3px]">{p.k}</div>
              <div className="flex flex-1 items-center border-r border-b border-black pt-[2px] pl-[3px] whitespace-nowrap">{p.v}</div>
            </div>
          ),
        )}
      </div>
      <div className="flex h-[29px] shrink-0 items-start">
        <div className="flex h-[26px] w-[38px] items-center justify-center border border-[#222] bg-[#2a2a2a] text-[#9a9a9a]">View</div>
        <div className="flex h-[29px] w-[37px] items-center justify-center rounded-b-[3px] border border-[#222] bg-gradient-to-b from-[#454545] to-[#3d3d3d] text-[#f2f2f2]">Data</div>
      </div>
      <div className="mt-px flex h-[30px] shrink-0 items-start">
        <div className="flex h-[27px] w-[41px] items-center justify-center border border-[#222] bg-[#2a2a2a] pb-px text-[#9a9a9a]">Tasks</div>
        <div className="flex h-[30px] w-[88px] items-center justify-center rounded-b-[3px] border border-[#222] bg-gradient-to-b from-[#454545] to-[#3d3d3d] text-[#f2f2f2]">Property view</div>
        <div className="flex h-[27px] w-[78px] items-center justify-center border border-[#222] bg-[#2a2a2a] pb-px text-[#9a9a9a]">Report view</div>
      </div>
    </div>
  );
}

function Cross() {
  return (
    <svg width="14" height="14" fill="none" stroke="#909090" strokeWidth="3">
      <path d="M1 1l12 12M13 1L1 13" />
    </svg>
  );
}

function Caret() {
  return (
    <svg width="8" height="5" className="mt-1 mr-[2px]">
      <path d="M0 0h8L4 4.500z" fill="#c4c4c4" />
    </svg>
  );
}

function Marks() {
  return (
    <svg className="pointer-events-none absolute top-0 left-0" width="1281" height="802" fill="none" fontFamily="Noto Sans, sans-serif" fontWeight="700" fontSize="18" textAnchor="middle">
      <rect x="195.200" y="108.200" width="28.800" height="33" stroke="#f00" strokeWidth="2.600" />
      <rect x="9.200" y="186" width="145" height="16.500" stroke="#f00" strokeWidth="2.500" />
      <path d="M212 214L211 160M171 259L159 222" stroke="#f00" strokeWidth="3" />
      <path d="M210.500 142l8.500 22h-16zM152 203l15 18-14.500 5z" fill="#f00" />
      {[
        [214, 232, "2"],
        [182, 274, "1"],
      ].map(([x, y, t]) => (
        <g key={t}>
          <circle cx={x} cy={y} r="20" fill="#111" stroke="#ddd" strokeWidth="1" />
          <circle cx={x} cy={y} r="18" fill="#f00" stroke="#fff" strokeWidth="1.200" />
          <text x={x} y={Number(y) + 6} fill="#fff">{t}</text>
        </g>
      ))}
    </svg>
  );
}

export default function App() {
  return (
    <div className="relative h-[802px] w-[1281px] overflow-hidden bg-white pt-[7px] pl-2 font-['Noto_Sans',sans-serif] text-[12px] leading-4">
      <div className="flex h-[786px] w-[1263px] flex-col overflow-hidden rounded-t-[12px] border-x border-b border-[#292929] bg-[#333333] shadow-[0_2px_8px_1px_rgba(0,0,0,0.5)]">
        <TitleBar />
        <MenuBar />
        <Toolbars />
        <div className="flex h-[615px] shrink-0">
          <div className="flex flex-1 flex-col">
            <div className="flex h-[568px] bg-[#212529]">
              <Tree />
              <Sheet />
              <div className="flex-1" />
              <div className="flex w-[13px] flex-col border-l border-black bg-[#202020]">
                <div className="flex h-[13px] items-center justify-center border-b border-black bg-[#333] text-[5px] text-[#888]">▴</div>
                <div className="h-[183px]" />
                <div className="h-[176px] border-y border-black bg-gradient-to-r from-[#343434] to-[#444]" />
                <div className="flex-1" />
                <div className="flex h-[13px] items-center justify-center border-y border-black bg-[#333] text-[5px] text-[#888]">▾</div>
              </div>
            </div>
            <div className="flex h-[14px] w-[909px] border-y border-r border-black bg-[#202020]">
              <div className="flex w-[13px] items-center justify-center border-r border-black bg-[#333]">
                <i className="h-[2px] w-[2px] bg-[#888]" />
              </div>
              <div className="w-[115px]" />
              <div className="w-[653px] border-x border-black bg-gradient-to-b from-[#363636] to-[#464646]" />
              <div className="flex-1" />
              <div className="flex w-[13px] items-center justify-center border-l border-black bg-[#333]">
                <i className="h-[2px] w-[2px] bg-[#888]" />
              </div>
            </div>
            <div className="flex h-[33px] items-start">
              <div className="flex h-[30px] w-[172px] items-center rounded-b-[3px] border border-[#1f1f1f] bg-[#2a2a2a] pl-[6px] text-[#9a9a9a]">
                <DocIcon />
                <span className="ml-[12px] flex-1 pt-[2px]">Ejemplo-2D-01 : 1*</span>
                <div className="mt-[3px] mr-[7px]">
                  <Cross />
                </div>
              </div>
              <div className="flex h-[33px] w-[101px] items-center rounded-b-[3px] border border-[#1f1f1f] bg-gradient-to-b from-[#464646] to-[#3c3c3c] pl-[5px] text-[#f2f2f2]">
                <div className="h-[12px] w-[14px] bg-[#e4e5e1]" />
                <span className="ml-[11px] flex-1">Page*</span>
                <div className="mr-[7px]">
                  <Cross />
                </div>
              </div>
            </div>
          </div>
          <PropertyPanel />
        </div>
        <div className="flex flex-1 items-center pl-[6px] text-[#ededed]">
          <span className="flex-1 pt-[2px]">Switch between workbenches</span>
          <div className="flex h-[27px] w-[90px] items-center rounded-[3px] border border-black bg-[#2c2c2c] pl-[1px]">
            <svg width="14" height="13">
              <path d="M0 0h14v13H0z" fill="#34659f" />
              <path d="M0 0h14L7 5z" fill="#4a7dbb" />
            </svg>
            <span className="ml-[6px] flex-1 pt-[2px]">1</span>
            <Caret />
          </div>
          <div className="ml-[6px] flex h-[27px] w-[93px] items-center rounded-[3px] border border-black bg-[#2c2c2c] pl-[13px]">
            <svg width="10" height="14" fill="none" stroke="#bdbdbd" strokeWidth="1.400">
              <rect x="1" y="1" width="8" height="12" rx="4" />
              <path d="M5 1v5M3.500 5.500h3" />
            </svg>
            <span className="ml-[5px] flex-1 pt-[2px]">Blender</span>
            <Caret />
          </div>
          <div className="ml-[6px] flex h-[27px] w-[141px] items-center rounded-[3px] border border-black bg-[#2c2c2c] pl-[5px] whitespace-nowrap">
            <span className="flex-1 pt-[2px]">12.10 mm x 9.07 mm</span>
            <Caret />
          </div>
          <svg width="13" height="13" className="ml-[6px] self-end">
            {[0, 1, 2, 3].map((r) =>
              Array.from({ length: r + 1 }, (_, c) => <rect key={r + "-" + c} x={10 - c * 3} y={r * 3 + 1} width="2" height="2" fill="#777" />),
            )}
          </svg>
        </div>
      </div>
      <Marks />
    </div>
  );
}
